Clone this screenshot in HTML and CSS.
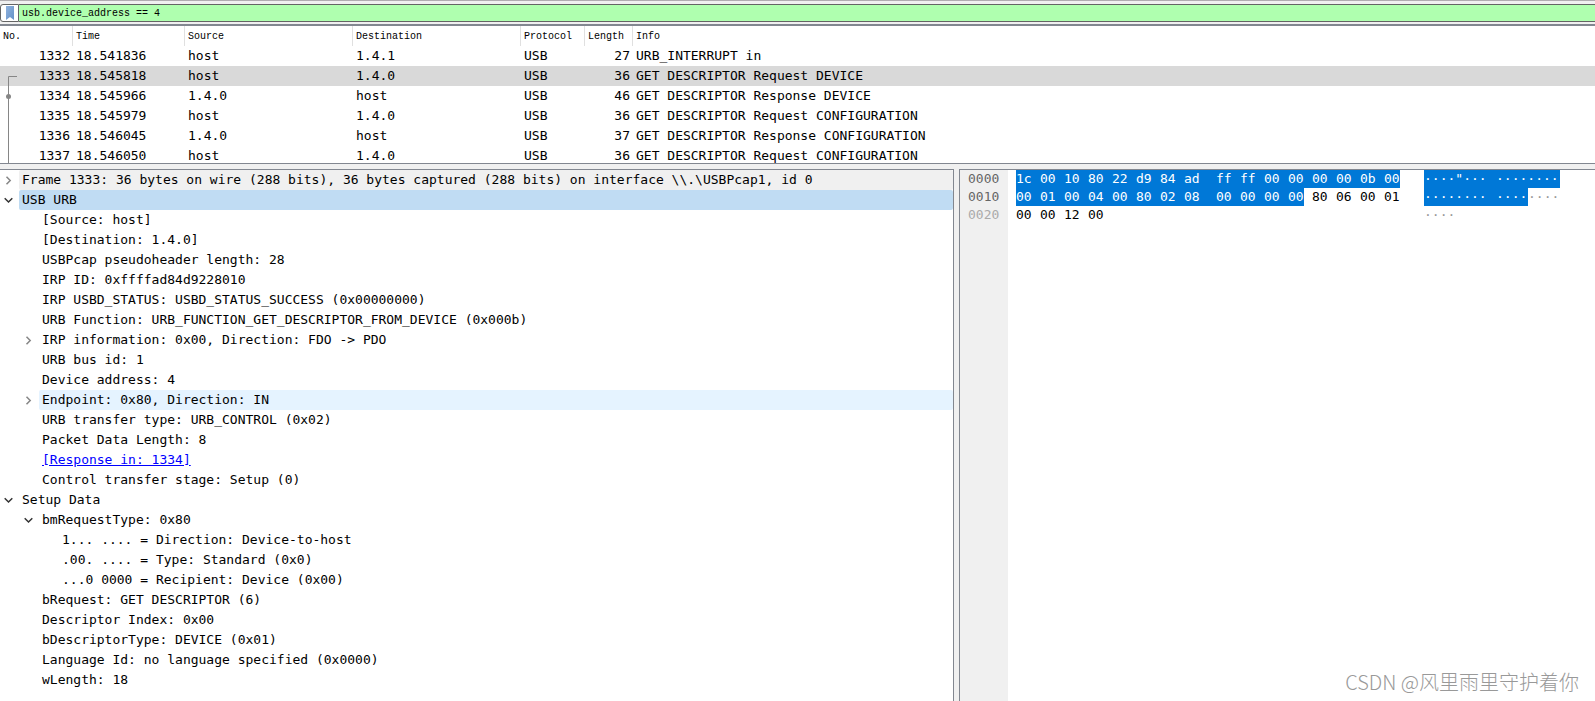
FILE: index.html
```html
<!DOCTYPE html>
<html lang="en">
<head>
<meta charset="utf-8">
<title>USB capture</title>
<link rel="stylesheet" href="styles.css">
</head>
<body>
<form class="filter">
  <button class="bookmark" type="button" aria-label="Filter bookmarks">
    <svg width="8" height="14" viewBox="0 0 8 14"><defs><linearGradient id="bm" x1="0" y1="0" x2="1" y2="1"><stop offset="0" stop-color="#8fb2de"/><stop offset="1" stop-color="#6591c8"/></linearGradient></defs><path d="M0 0H8V14L4 11L0 14Z" fill="url(#bm)"/></svg>
  </button>
  <input class="filter-text" type="text" aria-label="Display filter" value="usb.device_address == 4">
</form>
<main class="panes">
  <section class="packets">
    <table class="packet-table">
      <colgroup><col class="c-no"><col class="c-time"><col class="c-addr"><col class="c-addr"><col class="c-proto"><col class="c-len"><col></colgroup>
      <thead><tr><th>No.</th><th>Time</th><th>Source</th><th>Destination</th><th>Protocol</th><th>Length</th><th>Info</th></tr></thead>
      <tbody>
        <tr><td class="num">1332</td><td>18.541836</td><td>host</td><td>1.4.1</td><td>USB</td><td class="num">27</td><td>URB_INTERRUPT in</td></tr>
        <tr class="current"><td class="num">1333</td><td>18.545818</td><td>host</td><td>1.4.0</td><td>USB</td><td class="num">36</td><td>GET DESCRIPTOR Request DEVICE</td></tr>
        <tr><td class="num">1334</td><td>18.545966</td><td>1.4.0</td><td>host</td><td>USB</td><td class="num">46</td><td>GET DESCRIPTOR Response DEVICE</td></tr>
        <tr><td class="num">1335</td><td>18.545979</td><td>host</td><td>1.4.0</td><td>USB</td><td class="num">36</td><td>GET DESCRIPTOR Request CONFIGURATION</td></tr>
        <tr><td class="num">1336</td><td>18.546045</td><td>1.4.0</td><td>host</td><td>USB</td><td class="num">37</td><td>GET DESCRIPTOR Response CONFIGURATION</td></tr>
        <tr><td class="num">1337</td><td>18.546050</td><td>host</td><td>1.4.0</td><td>USB</td><td class="num">36</td><td>GET DESCRIPTOR Request CONFIGURATION</td></tr>
      </tbody>
    </table>
    <svg class="related" width="20" height="90" viewBox="0 0 20 90"><path d="M17 .5H8.500V90" fill="none" stroke="#868686"/><circle cx="8.500" cy="20.500" r="2.500" fill="#868686"/></svg>
  </section>
  <div class="lower">
    <section class="details">
      <ul class="tree">
        <li><div class="row"><button class="toggle" aria-label="Expand Frame"><svg width="7" height="9" viewBox="0 0 7 9"><path d="M1.500 .8L5.200 4.500L1.500 8.200" class="closed"/></svg></button><span class="label top">Frame 1333: 36 bytes on wire (288 bits), 36 bytes captured (288 bits) on interface \\.\USBPcap1, id 0</span></div></li>
        <li><div class="row"><button class="toggle" aria-label="Collapse USB URB"><svg width="9" height="7" viewBox="0 0 9 7"><path d="M.7 1.200L4.500 5L8.300 1.200" class="open"/></svg></button><span class="label selected">USB URB</span></div>
          <ul class="tree nested">
            <li class="leaf">[Source: host]</li>
            <li class="leaf">[Destination: 1.4.0]</li>
            <li class="leaf">USBPcap pseudoheader length: 28</li>
            <li class="leaf">IRP ID: 0xffffad84d9228010</li>
            <li class="leaf">IRP USBD_STATUS: USBD_STATUS_SUCCESS (0x00000000)</li>
            <li class="leaf">URB Function: URB_FUNCTION_GET_DESCRIPTOR_FROM_DEVICE (0x000b)</li>
            <li><div class="row"><button class="toggle" aria-label="Expand IRP information"><svg width="7" height="9" viewBox="0 0 7 9"><path d="M1.500 .8L5.200 4.500L1.500 8.200" class="closed"/></svg></button><span class="label">IRP information: 0x00, Direction: FDO -&gt; PDO</span></div></li>
            <li class="leaf">URB bus id: 1</li>
            <li class="leaf">Device address: 4</li>
            <li><div class="row"><button class="toggle" aria-label="Expand Endpoint"><svg width="7" height="9" viewBox="0 0 7 9"><path d="M1.500 .8L5.200 4.500L1.500 8.200" class="closed"/></svg></button><span class="label hovered">Endpoint: 0x80, Direction: IN</span></div></li>
            <li class="leaf">URB transfer type: URB_CONTROL (0x02)</li>
            <li class="leaf">Packet Data Length: 8</li>
            <li class="leaf"><a class="link" href="#1334">[Response in: 1334]</a></li>
            <li class="leaf">Control transfer stage: Setup (0)</li>
          </ul>
        </li>
        <li><div class="row"><button class="toggle" aria-label="Collapse Setup Data"><svg width="9" height="7" viewBox="0 0 9 7"><path d="M.7 1.200L4.500 5L8.300 1.200" class="open"/></svg></button><span class="label">Setup Data</span></div>
          <ul class="tree nested">
            <li><div class="row"><button class="toggle" aria-label="Collapse bmRequestType"><svg width="9" height="7" viewBox="0 0 9 7"><path d="M.7 1.200L4.500 5L8.300 1.200" class="open"/></svg></button><span class="label">bmRequestType: 0x80</span></div>
              <ul class="tree nested">
                <li class="leaf">1... .... = Direction: Device-to-host</li>
                <li class="leaf">.00. .... = Type: Standard (0x0)</li>
                <li class="leaf">...0 0000 = Recipient: Device (0x00)</li>
              </ul>
            </li>
            <li class="leaf">bRequest: GET DESCRIPTOR (6)</li>
            <li class="leaf">Descriptor Index: 0x00</li>
            <li class="leaf">bDescriptorType: DEVICE (0x01)</li>
            <li class="leaf">Language Id: no language specified (0x0000)</li>
            <li class="leaf">wLength: 18</li>
          </ul>
        </li>
      </ul>
    </section>
    <section class="bytes">
      <div class="offsets"><span>0000</span><span>0010</span><span class="dim">0020</span></div>
      <div class="dump">
        <div class="line">
          <div class="hex"><b class="sel">1c</b><b class="sel">00</b><b class="sel">10</b><b class="sel">80</b><b class="sel">22</b><b class="sel">d9</b><b class="sel">84</b><b class="sel mid">ad</b><b class="sel">ff</b><b class="sel">ff</b><b class="sel">00</b><b class="sel">00</b><b class="sel">00</b><b class="sel">00</b><b class="sel">0b</b><b class="sel end">00</b></div>
          <div class="ascii"><span class="eight sel">····"···</span><span class="eight last sel">········</span></div>
        </div>
        <div class="line">
          <div class="hex"><b class="sel">00</b><b class="sel">01</b><b class="sel">00</b><b class="sel">04</b><b class="sel">00</b><b class="sel">80</b><b class="sel">02</b><b class="sel mid">08</b><b class="sel">00</b><b class="sel">00</b><b class="sel">00</b><b class="sel end">00</b><b>80</b><b>06</b><b>00</b><b class="end">01</b></div>
          <div class="ascii"><span class="eight sel">········</span><span class="four sel">····</span><span class="four">····</span></div>
        </div>
        <div class="line">
          <div class="hex"><b>00</b><b>00</b><b>12</b><b>00</b></div>
          <div class="ascii"><span class="four">····</span></div>
        </div>
      </div>
    </section>
  </div>
</main>
<div class="watermark">CSDN @风里雨里守护着你</div>
</body>
</html>
```
FILE: styles.css
```css
* { box-sizing: border-box; }

body {
  margin: 0;
  height: 100vh;
  display: flex;
  flex-direction: column;
  overflow: hidden;
  background: #f0f0f0;
  color: #000;
  font-family: "DejaVu Sans Mono", monospace;
  font-size: 13px;
  line-height: 20px;
}

button {
  border: 0;
  padding: 0;
  background: none;
  display: flex;
  align-items: center;
  justify-content: center;
}

ul { margin: 0; padding: 0; list-style: none; }

.filter {
  display: flex;
  height: 24px;
  padding: 3px 0 2px;
  border-top: 1px solid #b0acb0;
}

.bookmark {
  width: 19px;
  background: #fff;
  border: 1px solid #646464;
  border-radius: 3px 0 0 3px;
}

.filter-text {
  flex: 1;
  min-width: 0;
  border: solid #646464;
  border-width: 1px 0;
  padding: 0 3px;
  background: #afffaf;
  color: #000;
  font: 10px "Liberation Mono", monospace;
}

.panes {
  flex: 1;
  min-height: 0;
  display: grid;
  grid-template-rows: minmax(0, 5fr) minmax(0, 19fr);
  gap: 5px;
}

.packets {
  position: relative;
  overflow: hidden;
  background: #fff;
  border-top: 2px solid #828790;
  border-bottom: 1px solid #828790;
}

.packet-table {
  width: 100%;
  table-layout: fixed;
  border-collapse: separate;
  border-spacing: 0;
}

.c-no { width: 73px; }
.c-time { width: 112px; }
.c-addr { width: 168px; }
.c-proto { width: 64px; }
.c-len { width: 48px; }

th {
  height: 20px;
  padding: 1px 3px 0;
  border-right: 1px solid #e0e0e0;
  font: 10px/19px "Liberation Mono", monospace;
  text-align: left;
}
th:last-child { border-right: 0; }

td {
  height: 20px;
  padding: 0 3px;
  white-space: nowrap;
}

.num { text-align: right; }
.current { background: #d9d9d9; }

.related {
  position: absolute;
  left: 0;
  top: 50px;
}

.lower {
  display: grid;
  grid-template-columns: minmax(0, 3fr) minmax(0, 2fr);
  gap: 5px;
}

.details {
  overflow: hidden;
  background: #fff;
  border-top: 1px solid #828790;
  border-right: 1px solid #828790;
}

.nested { margin-left: 20px; }
.row { display: flex; }
.toggle { width: 19px; padding-right: 2px; }
.label {
  flex: 1;
  padding-left: 3px;
  border-radius: 2px;
  white-space: pre;
}
.leaf { padding-left: 22px; white-space: pre; }
.top { background: #f0f0f0; }
.selected { background: #c0dcf3; }
.hovered { background: #e5f3ff; }
.link { color: #00f; }

.closed { fill: none; stroke: #868686; stroke-width: 1.500; }
.open { fill: none; stroke: #333; stroke-width: 1.500; }

.bytes {
  display: flex;
  overflow: hidden;
  background: #fff;
  border-top: 1px solid #828790;
  border-left: 1px solid #828790;
  line-height: 18px;
}

.offsets {
  display: flex;
  flex-direction: column;
  width: 48px;
  padding-left: 8px;
  background: #f0f0f0;
  color: #666;
}
.dim { color: #aaa; }

.dump { padding-left: 8px; }
.line { display: flex; }

.hex {
  display: flex;
  width: 408px;
}
.hex b {
  width: 24px;
  font-weight: 400;
}
.hex .mid { width: 32px; }
.hex .end { width: 16px; margin-right: 8px; }

.ascii { display: flex; color: #999; }
.eight { width: 72px; }
.eight.last { width: 64px; }
.four { width: 32px; }

.hex .sel, .ascii .sel {
  background: #0078d7;
  color: #fff;
}

.watermark {
  position: absolute;
  right: 16px;
  bottom: 4px;
  color: #999;
  font: 300 20px/30px "Noto Sans CJK SC", sans-serif;
}
```
